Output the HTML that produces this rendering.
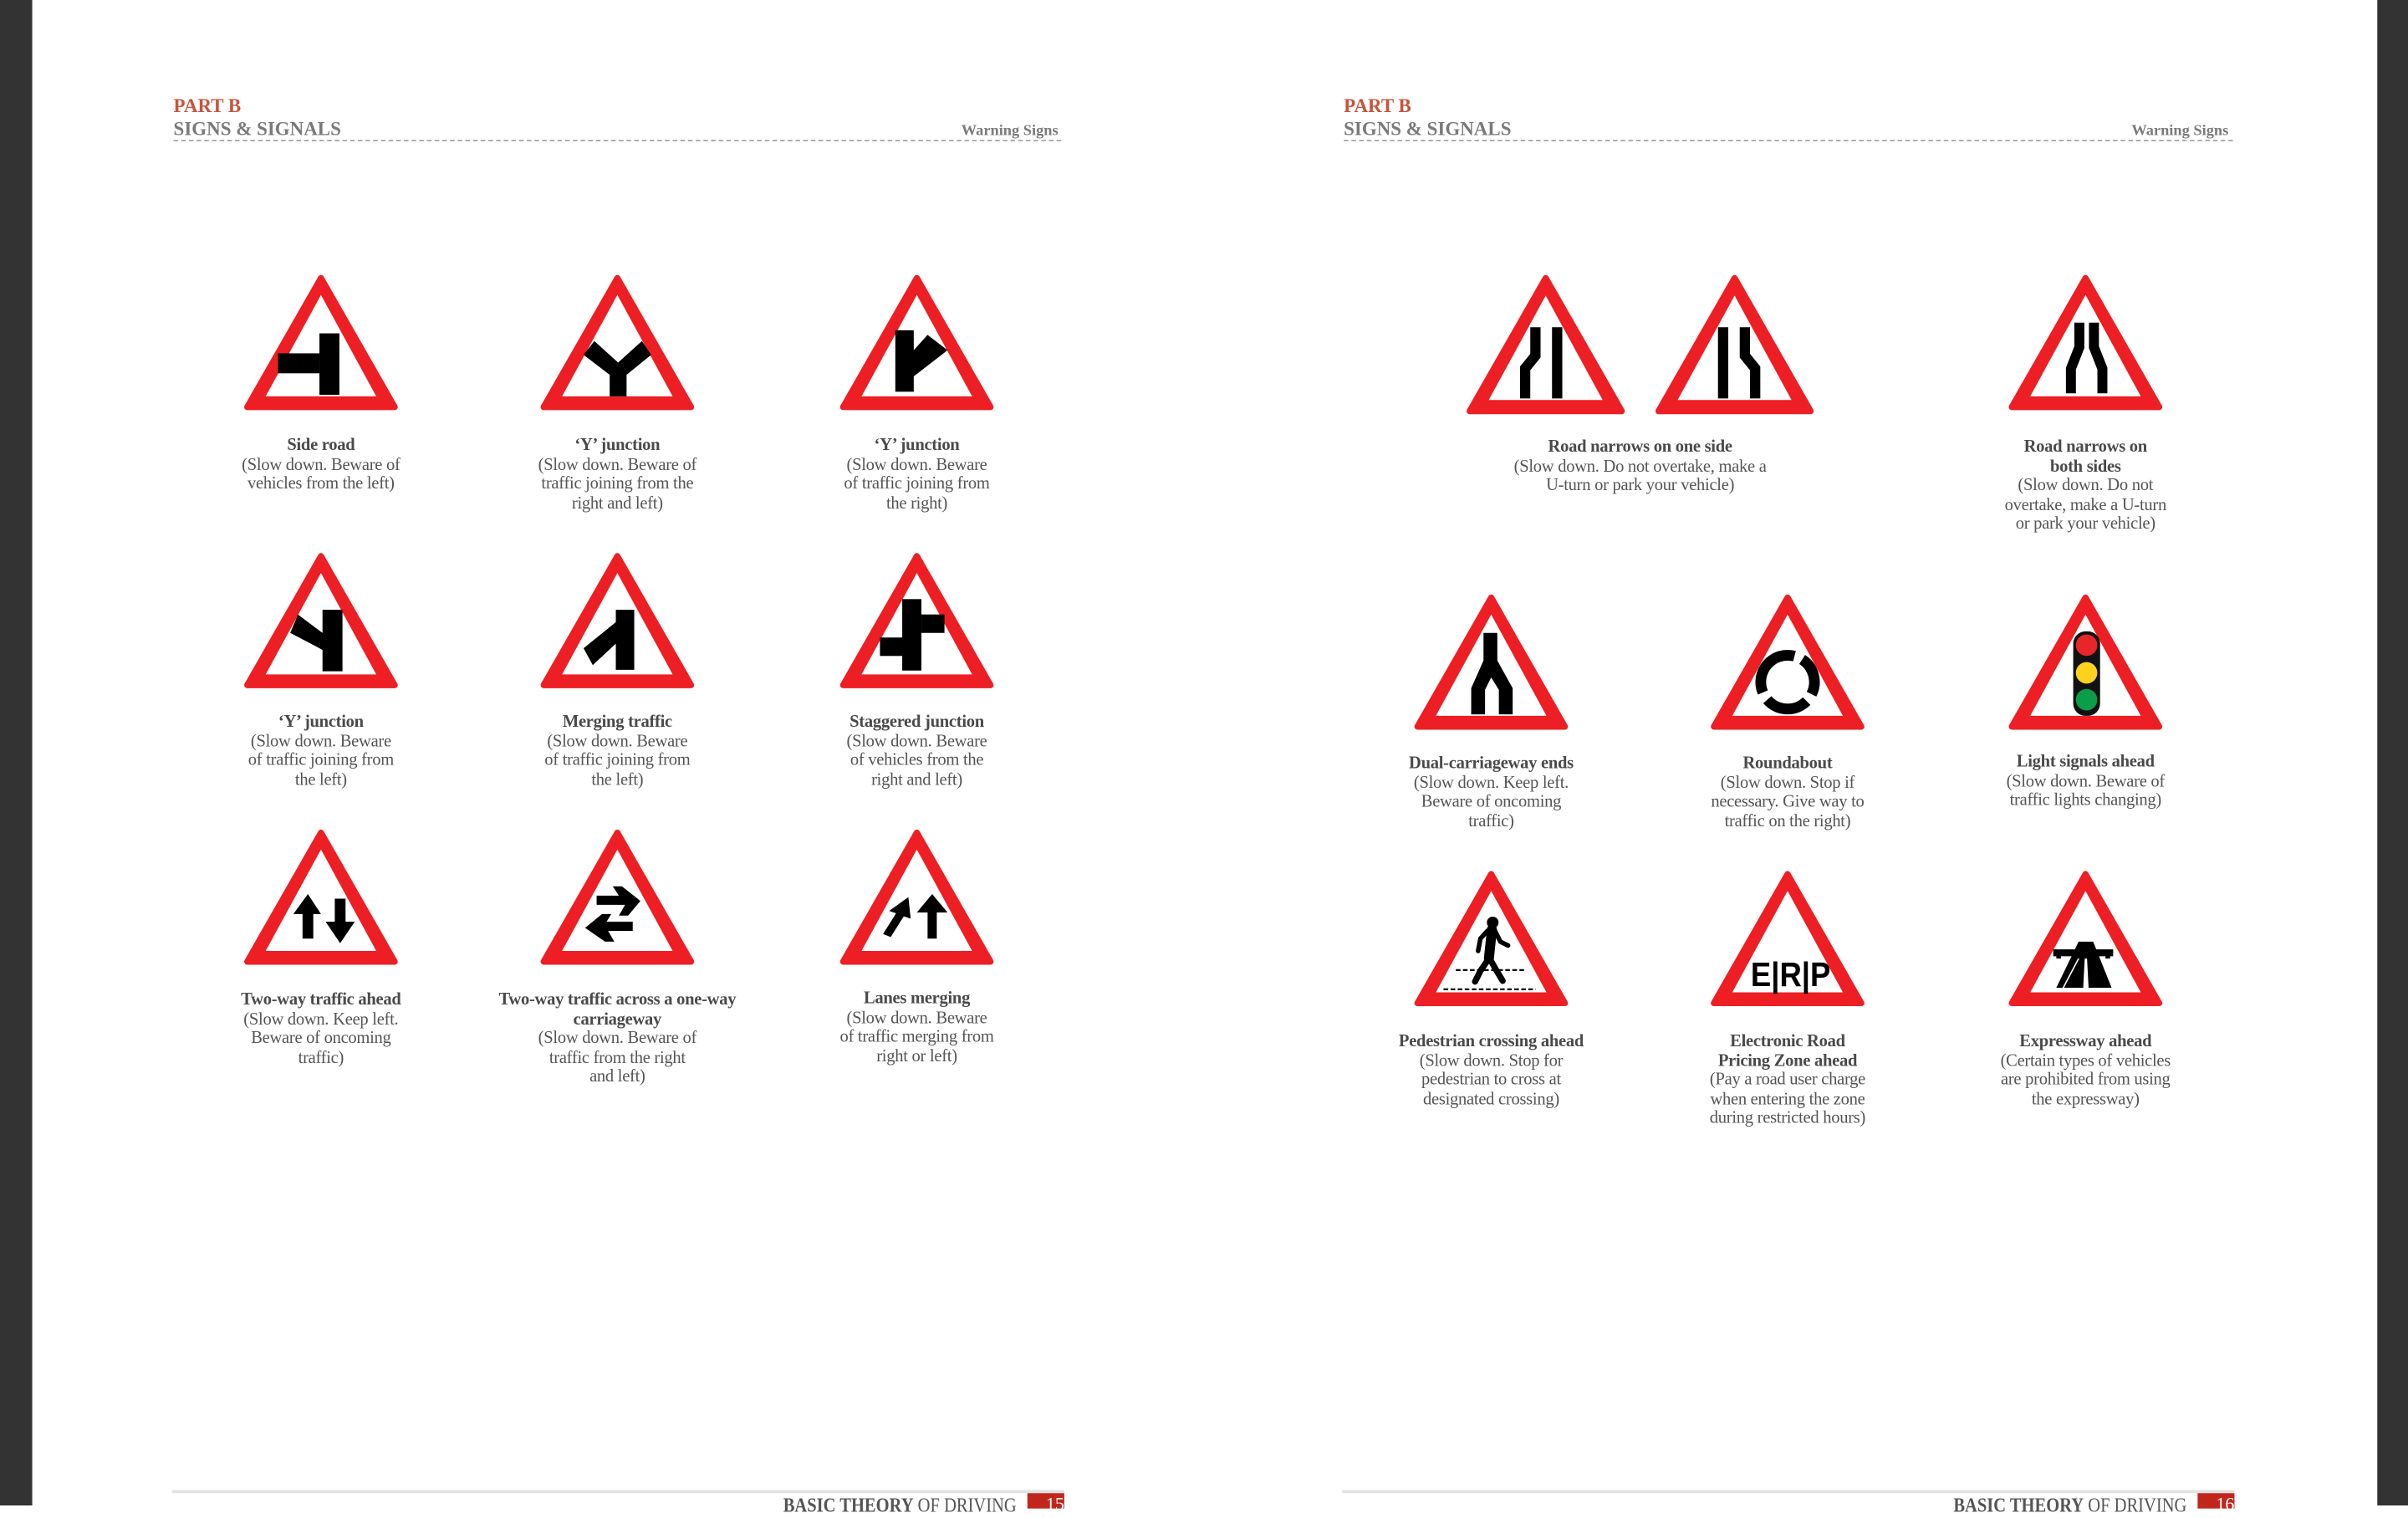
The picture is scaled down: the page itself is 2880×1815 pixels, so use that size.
<!DOCTYPE html>
<html><head><meta charset="utf-8">
<style>
html,body{margin:0;padding:0;background:#fff;}
body{width:2880px;height:1800px;overflow:hidden;position:relative;}
#w{position:absolute;left:0;top:0;width:1568px;height:980px;transform:scale(1.836735);transform-origin:0 0;background:#fff;font-family:"Liberation Serif",serif;}
.bar{position:absolute;top:0;height:980px;background:#333;}
.t{position:absolute;white-space:nowrap;}
.cap{position:absolute;width:180px;margin-left:-90px;text-align:center;font-size:11.2px;line-height:12.6px;color:#555;letter-spacing:-0.15px;}
.cap b{color:#4a4a4a;}
.pb{font-weight:bold;color:#c9533c;font-size:12.5px;}
.ss{font-weight:bold;color:#7a7a7a;font-size:12.5px;}
.ws{font-weight:bold;color:#7a7a7a;font-size:10px;}
.dash{position:absolute;height:0;border-top:1px dashed #aaa;}
.fl{position:absolute;height:2px;background:#e2e2e2;top:970px;}
.ft{position:absolute;top:972px;font-size:13px;color:#555;white-space:nowrap;transform:scaleX(0.86);transform-origin:0 0;}
.pg{position:absolute;top:972px;width:24px;height:10px;background:#c0261c;color:#fff;font-size:12px;text-align:right;}
</style></head><body>
<div id="w">
<div class="bar" style="left:0;width:21px"></div>
<div class="bar" style="left:1548px;width:20px"></div>

<div class="t pb" style="left:113px;top:62px">PART B</div>
<div class="t ss" style="left:113px;top:77px">SIGNS &amp; SIGNALS</div>
<div class="t ws" style="left:626px;top:80px">Warning Signs</div>
<div class="dash" style="left:113px;width:578px;top:91px"></div>

<div class="t pb" style="left:875px;top:62px">PART B</div>
<div class="t ss" style="left:875px;top:77px">SIGNS &amp; SIGNALS</div>
<div class="t ws" style="left:1388px;top:80px">Warning Signs</div>
<div class="dash" style="left:875px;width:579px;top:91px"></div>

<svg width="1568" height="980" style="position:absolute;left:0;top:0" viewBox="0 0 1568 980">
<defs>
<g id="tri">
<polygon points="50,3 98,87 2,87" fill="#ed1f24" stroke="#ed1f24" stroke-width="4" stroke-linejoin="round"/>
<polygon points="50,14 86,80 14,80" fill="#fff"/>
</g>
</defs>
<g transform="translate(159,178)"><use href="#tri"/>
<rect x="49" y="39" width="13" height="40"/><rect x="22" y="52" width="27" height="13"/></g>
<g transform="translate(352,178)"><use href="#tri"/>
<polygon points="28,53 35,44 50.5,58 66,44 72,53 56,66 56,80 45,80 45,66"/></g>
<g transform="translate(547,178)"><use href="#tri"/>
<polygon points="36,37 48,37 48,50 57,40 70,50 48,67 48,77 36,77"/></g>
<g transform="translate(159,359)"><use href="#tri"/>
<polygon points="64,38 64,78 51,78 51,64 30,53 35,41 51,53 51,38"/></g>
<g transform="translate(352,359)"><use href="#tri"/>
<polygon points="49,38 61,38 61,77 49,77 49,60 34,74 28,63 49,46"/></g>
<g transform="translate(547,359)"><use href="#tri"/>
<rect x="40.5" y="31" width="12.5" height="46.5"/><rect x="53" y="41" width="15" height="12"/><rect x="26" y="56" width="15" height="12"/></g>
<g transform="translate(159,539)"><use href="#tri"/>
<polygon points="41.5,43 50,56 45,56 45,72 38,72 38,56 32,56"/>
<polygon points="59,46 66,46 66,61 72,61 62.5,75 53,61 59,61"/></g>
<g transform="translate(352,539)"><use href="#tri"/>
<polygon points="36.5,44 51,44 47,38 53,38 65,47.5 57,57 51,57 55,50 36.5,50"/>
<polygon points="60,61 60,67 44,67 48,74 42,74 29,65 40,56 46,56 43,61"/></g>
<g transform="translate(547,539)"><use href="#tri"/>
<polygon points="60,43 70,55 63,55 63,72 57,72 57,55 50,55"/>
<polygon points="44.5,45 46,59 41.5,57.5 33,71 28,69 36.5,55.5 32,54"/></g>

<g transform="translate(955,178) scale(1.03)"><use href="#tri"/>
<polyline points="43.5,34 43.5,52 37,60 37,79" fill="none" stroke="#000" stroke-width="6.5"/>
<rect x="54" y="34" width="6.5" height="45"/></g>
<g transform="translate(1181,178) scale(-1.03,1.03)"><use href="#tri"/>
<polyline points="43.5,34 43.5,52 37,60 37,79" fill="none" stroke="#000" stroke-width="6.5"/>
<rect x="54" y="34" width="6.5" height="45"/></g>
<g transform="translate(1308,178)"><use href="#tri"/>
<polyline points="46,32 46,48 40.5,62 40.5,78" fill="none" stroke="#000" stroke-width="6.5"/>
<polyline points="55.5,32 55.5,48 61,62 61,78" fill="none" stroke="#000" stroke-width="6.5"/></g>
<g transform="translate(921,386)"><use href="#tri"/>
<polygon points="45,26 54,26 54,44 64,62 64,79 55,79 55,63 50,55 46,63 46,79 37,79 37,62 45,44"/></g>
<g transform="translate(1114,386)"><use href="#tri"/>
<g fill="none" stroke="#000" stroke-width="7">
<path d="M59.5,43.3 A17.5,17.5 0 0 1 65.6,65.9"/>
<path d="M62.4,70.4 A17.5,17.5 0 0 1 36.8,69.5"/>
<path d="M33.9,64.8 A17.5,17.5 0 0 1 54.5,41.1"/>
</g></g>
<g transform="translate(1308,386)"><use href="#tri"/>
<rect x="42" y="25" width="17.5" height="55" rx="8" fill="#111"/>
<circle cx="50.7" cy="34" r="7" fill="#e8262a"/>
<circle cx="50.7" cy="52" r="7" fill="#fcd21c"/>
<circle cx="50.7" cy="69.5" r="7" fill="#0a9e4a"/></g>
<g transform="translate(921,566)"><use href="#tri"/>
<circle cx="51" cy="34.5" r="3.8"/>
<g fill="none" stroke="#000" stroke-linecap="round" stroke-linejoin="round">
<path d="M50.5,39 L48.5,58" stroke-width="6.5"/>
<path d="M48.5,58 L43,66 L39.5,73" stroke-width="4"/>
<path d="M49,58 L53,65 L57.5,72.5" stroke-width="4"/>
<path d="M47.5,40 L43,45 L41.5,53" stroke-width="3"/>
<path d="M52.5,40 L56,47 L61,49.5" stroke-width="3"/>
</g>
<line x1="27" y1="65.5" x2="73" y2="65.5" stroke="#000" stroke-width="1.2" stroke-dasharray="3 1.6"/>
<line x1="19" y1="78" x2="79" y2="78" stroke="#000" stroke-width="1.2" stroke-dasharray="3 1.6"/></g>
<g transform="translate(1114,566)"><use href="#tri"/>
<text x="52" y="76" font-family="Liberation Sans,sans-serif" font-weight="bold" font-size="22" text-anchor="middle" textLength="52" lengthAdjust="spacingAndGlyphs">E|R|P</text></g>
<g transform="translate(1308,566)"><use href="#tri"/>
<polygon points="45.5,47 55,47 67,77 31,77"/>
<polygon points="49.5,58 51,58 52,77 48.5,77" fill="#fff"/>
<polygon points="45,58 46,58 36,77 35,77" fill="#fff"/>
<rect x="29" y="52" width="39" height="4.5"/>
<rect x="31" y="56" width="3" height="2"/><rect x="63" y="56" width="3" height="2"/></g>
</svg>

<div class="cap" style="left:209px;top:284px"><b>Side road</b><br>(Slow down. Beware of<br>vehicles from the left)</div>
<div class="cap" style="left:402px;top:284px"><b>‘Y’ junction</b><br>(Slow down. Beware of<br>traffic joining from the<br>right and left)</div>
<div class="cap" style="left:597px;top:284px"><b>‘Y’ junction</b><br>(Slow down. Beware<br>of traffic joining from<br>the right)</div>
<div class="cap" style="left:209px;top:464px"><b>‘Y’ junction</b><br>(Slow down. Beware<br>of traffic joining from<br>the left)</div>
<div class="cap" style="left:402px;top:464px"><b>Merging traffic</b><br>(Slow down. Beware<br>of traffic joining from<br>the left)</div>
<div class="cap" style="left:597px;top:464px"><b>Staggered junction</b><br>(Slow down. Beware<br>of vehicles from the<br>right and left)</div>
<div class="cap" style="left:209px;top:645px"><b>Two-way traffic ahead</b><br>(Slow down. Keep left.<br>Beware of oncoming<br>traffic)</div>
<div class="cap" style="left:402px;top:645px"><b>Two-way traffic across a one-way<br>carriageway</b><br>(Slow down. Beware of<br>traffic from the right<br>and left)</div>
<div class="cap" style="left:597px;top:644px"><b>Lanes merging</b><br>(Slow down. Beware<br>of traffic merging from<br>right or left)</div>

<div class="cap" style="left:1068px;top:285px;width:220px;margin-left:-110px"><b>Road narrows on one side</b><br>(Slow down. Do not overtake, make a<br>U-turn or park your vehicle)</div>
<div class="cap" style="left:1358px;top:285px"><b>Road narrows on<br>both sides</b><br>(Slow down. Do not<br>overtake, make a U-turn<br>or park your vehicle)</div>
<div class="cap" style="left:971px;top:491px"><b>Dual-carriageway ends</b><br>(Slow down. Keep left.<br>Beware of oncoming<br>traffic)</div>
<div class="cap" style="left:1164px;top:491px"><b>Roundabout</b><br>(Slow down. Stop if<br>necessary. Give way to<br>traffic on the right)</div>
<div class="cap" style="left:1358px;top:490px"><b>Light signals ahead</b><br>(Slow down. Beware of<br>traffic lights changing)</div>
<div class="cap" style="left:971px;top:672px"><b>Pedestrian crossing ahead</b><br>(Slow down. Stop for<br>pedestrian to cross at<br>designated crossing)</div>
<div class="cap" style="left:1164px;top:672px"><b>Electronic Road<br>Pricing Zone ahead</b><br>(Pay a road user charge<br>when entering the zone<br>during restricted hours)</div>
<div class="cap" style="left:1358px;top:672px"><b>Expressway ahead</b><br>(Certain types of vehicles<br>are prohibited from using<br>the expressway)</div>

<div class="fl" style="left:112px;width:581px"></div>
<div class="ft" style="left:510px"><b>BASIC THEORY</b> OF DRIVING</div>
<div class="pg" style="left:669px">15</div>
<div class="fl" style="left:874px;width:581px"></div>
<div class="ft" style="left:1272px"><b>BASIC THEORY</b> OF DRIVING</div>
<div class="pg" style="left:1431px">16</div>
</div>
</body></html>
